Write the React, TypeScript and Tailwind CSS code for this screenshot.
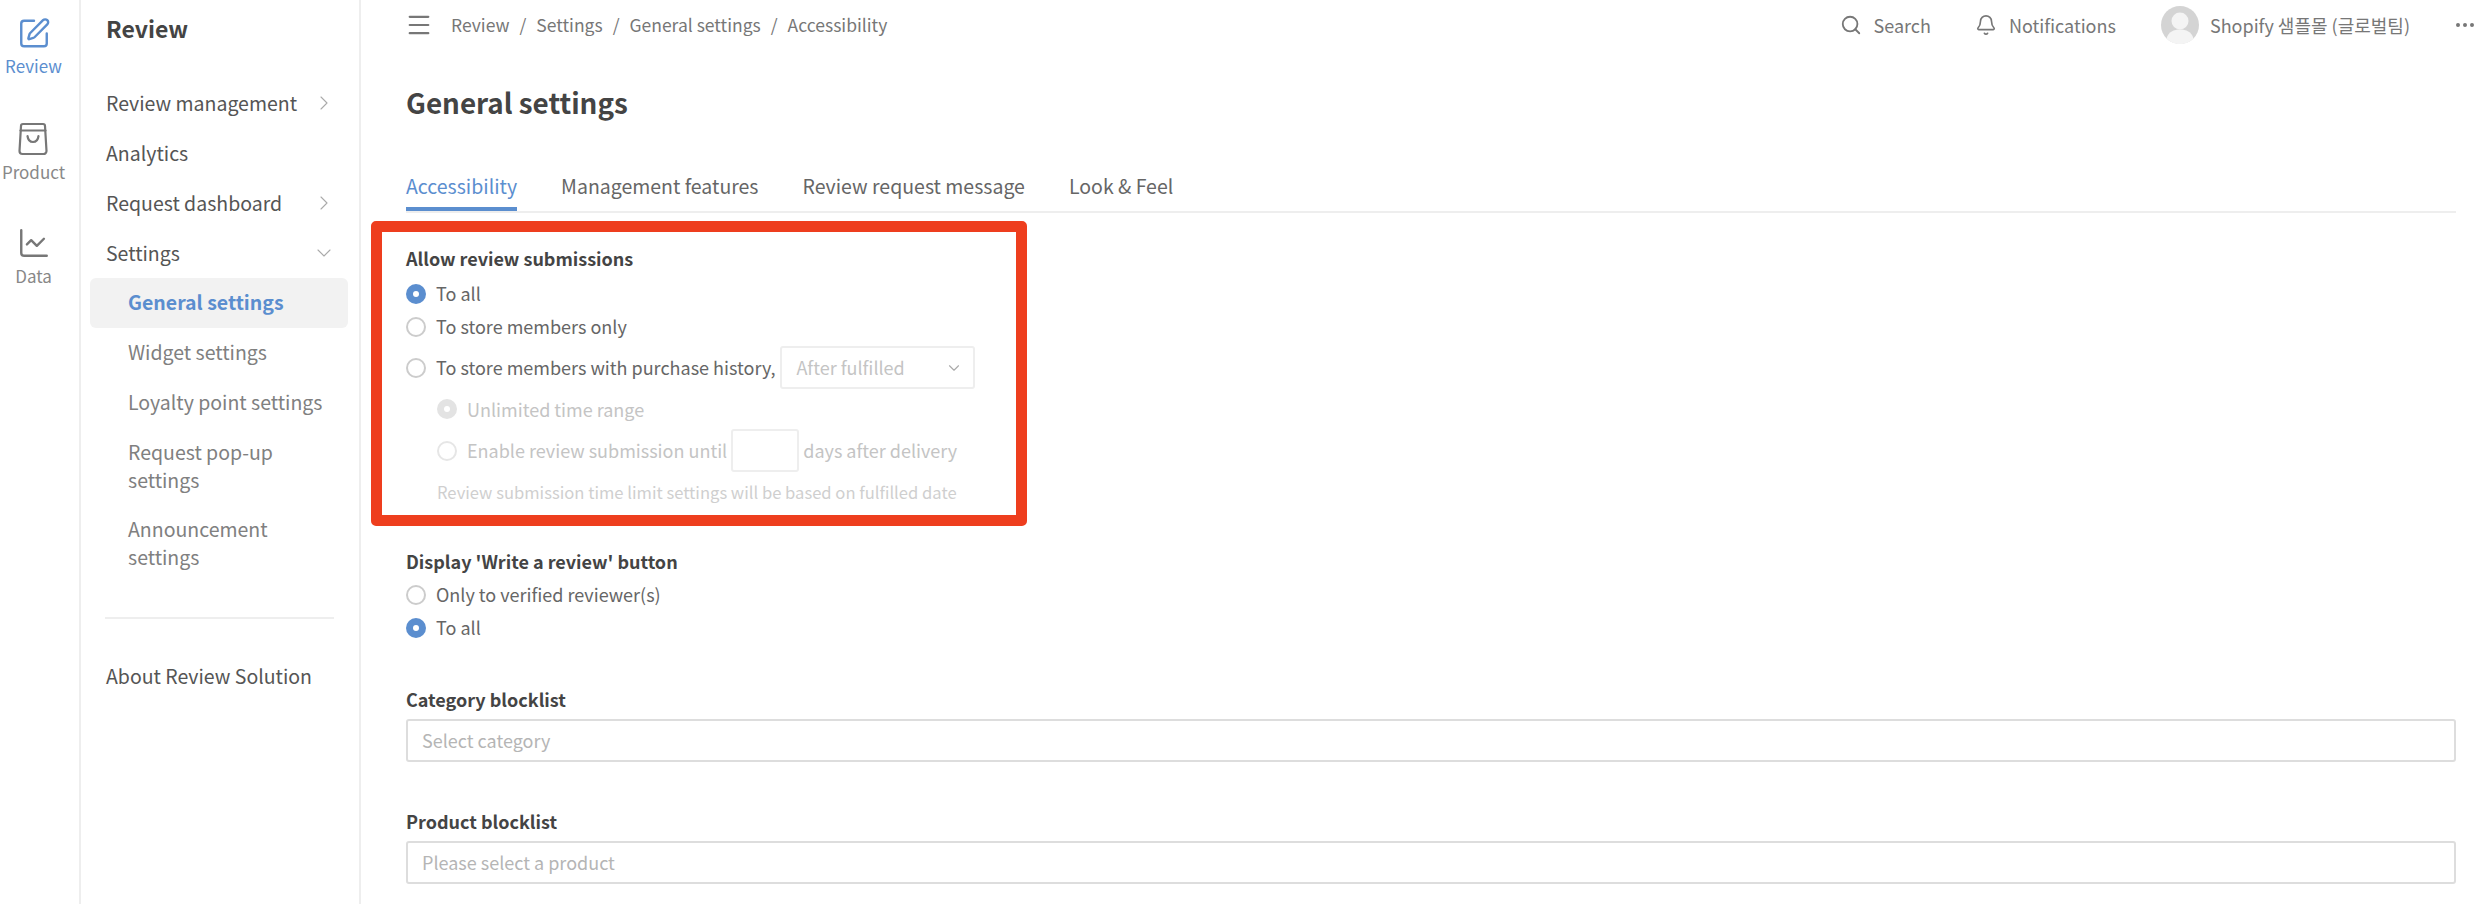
import React from "react";
import { SquarePen, ChartLine, ChevronRight, ChevronDown, Search, Bell, Menu, Ellipsis } from "lucide-react";

const Radio = ({ checked, disabled }: { checked?: boolean; disabled?: boolean }) => {
  if (checked && disabled)
    return (
      <span className="flex h-[20px] w-[20px] shrink-0 items-center justify-center rounded-full bg-[#e3e3e3]">
        <span className="h-[6px] w-[6px] rounded-full bg-white" />
      </span>
    );
  if (checked)
    return (
      <span className="flex h-[20px] w-[20px] shrink-0 items-center justify-center rounded-full bg-[#5b8ecf]">
        <span className="h-[6px] w-[6px] rounded-full bg-white" />
      </span>
    );
  return (
    <span
      className={
        disabled
          ? "h-[20px] w-[20px] shrink-0 rounded-full border-2 border-[#e6e6e6] bg-white"
          : "h-[20px] w-[20px] shrink-0 rounded-full border-2 border-[#cccccc] bg-white"
      }
    />
  );
};

const RailItem = ({ icon, label, active, className }: { icon: React.ReactNode; label: string; active?: boolean; className?: string }) => (
  <div className={"flex flex-col items-center " + (className ?? "")}>
    <div className="flex h-[34px] w-[34px] items-center justify-center">{icon}</div>
    <div className={active ? "mt-[5px] text-[17px] leading-[22px] text-[#5b8ecf]" : "mt-[5px] text-[17px] leading-[22px] text-[#888888]"}>{label}</div>
  </div>
);

const NavRow = ({ label, chevron }: { label: string; chevron?: "right" | "down" }) => (
  <div className="flex h-[50px] items-center justify-between pb-[1px] pl-[25px] pr-[23px] text-[19.5px] text-[#555555]">
    <span>{label}</span>
    {chevron === "right" && <ChevronRight size={24} strokeWidth={1.1} color="#aaaaaa" />}
    {chevron === "down" && <ChevronDown size={24} strokeWidth={1.1} color="#aaaaaa" />}
  </div>
);

const SubRow = ({ children, active }: { children: React.ReactNode; active?: boolean }) =>
  active ? (
    <div className="mx-[9px] mr-[11px] flex h-[50px] items-center rounded-[6px] bg-[#f2f2f2] pb-[2px] pl-[38px] text-[19.5px] font-bold text-[#5b8ecf]">
      {children}
    </div>
  ) : (
    <div className="flex min-h-[50px] items-center pb-[2px] pl-[47px] pr-[20px] text-[19.5px] leading-[28px] text-[#808080]">{children}</div>
  );

const OptRow = ({ children, className }: { children: React.ReactNode; className?: string }) => (
  <div className={"flex h-[33px] items-center gap-[10px] text-[18px] text-[#666666] " + (className ?? "")}>{children}</div>
);

const Label = ({ children, className }: { children: React.ReactNode; className?: string }) => (
  <div className={"h-[26px] text-[18px] font-bold leading-[26px] text-[#444444] " + (className ?? "")}>{children}</div>
);

const Field = ({ placeholder }: { placeholder: string }) => (
  <div className="flex h-[43px] items-center rounded-[3px] border-2 border-[#dddddd] px-[14px] text-[18px] text-[#b5b5b5]">{placeholder}</div>
);

export default function App() {
  return (
    <div
      className="relative flex h-[904px] w-[2486px] overflow-hidden bg-white"
      style={{ fontFamily: '"Noto Sans CJK KR", "Noto Sans", sans-serif' }}
    >
      {/* icon rail */}
      <div className="flex w-[81px] shrink-0 flex-col items-center border-r-2 border-[#eeeeee] pr-[12px] pt-[16px]">
        <RailItem active label="Review" icon={<SquarePen size={35} strokeWidth={1.7} color="#5b8ecf" />} />
        <RailItem
          className="mt-[45px]"
          label="Product"
          icon={
            <svg width="32" height="34" viewBox="0 0 32 34" fill="none" stroke="#777777" strokeWidth="2.2" strokeLinecap="round" strokeLinejoin="round">
              <path d="M6 2h20a2 2 0 0 1 2 2l1.500 25a3 3 0 0 1-3 3h-21a3 3 0 0 1-3-3L4 4a2 2 0 0 1 2-2z" />
              <path d="M3.500 8.500h25" />
              <path d="M10.500 14c.5 4 2.700 6 5.500 6s5-2 5.500-6" />
            </svg>
          }
        />
        <RailItem className="mt-[43px]" label="Data" icon={<ChartLine size={34} strokeWidth={1.7} color="#777777" />} />
      </div>

      {/* secondary sidebar */}
      <div className="flex w-[280px] shrink-0 flex-col border-r-2 border-[#eeeeee]">
        <div className="flex h-[56px] items-center pl-[25px] text-[23px] font-bold text-[#444444]">Review</div>
        <div className="mt-[22px]">
          <NavRow label="Review management" chevron="right" />
          <NavRow label="Analytics" />
          <NavRow label="Request dashboard" chevron="right" />
          <NavRow label="Settings" chevron="down" />
          <SubRow active>General settings</SubRow>
          <SubRow>Widget settings</SubRow>
          <SubRow>Loyalty point settings</SubRow>
          <SubRow>
            <span className="py-[9.5px]">Request pop-up settings</span>
          </SubRow>
          <SubRow>
            <span className="py-[9.5px]">Announcement settings</span>
          </SubRow>
        </div>
        <div className="mx-[24px] mr-[25px] mt-[35px] h-[2px] bg-[#eeeeee]" />
        <div className="mt-[33px] flex h-[50px] items-center pb-[2px] pl-[25px] text-[19.500px] text-[#555555]">About Review Solution</div>
      </div>

      {/* main */}
      <div className="flex min-w-0 flex-1 flex-col pl-[45px] pr-[30px]">
        {/* header */}
        <div className="flex h-[50px] shrink-0 items-center text-[18px] text-[#777777]">
          <Menu size={28} strokeWidth={1.8} color="#777777" className="ml-[-1px]" />
          <div className="ml-[18px] flex gap-[10px] text-[17.5px]">
            <span>Review</span>
            <span>/</span>
            <span>Settings</span>
            <span>/</span>
            <span>General settings</span>
            <span>/</span>
            <span>Accessibility</span>
          </div>
          <div className="ml-auto flex items-center">
            <Search size={22} strokeWidth={2} color="#777777" />
            <span className="ml-[11px]">Search</span>
            <Bell size={22} strokeWidth={1.8} color="#777777" className="ml-[44px]" />
            <span className="ml-[12px]">Notifications</span>
            <svg width="38" height="38" viewBox="0 0 38 38" className="ml-[45px]">
              <circle cx="19" cy="19" r="19" fill="#d4d4d4" />
              <circle cx="19" cy="15" r="8.500" fill="#f4f4f4" />
              <path d="M5.500 32.500c2-7 7.500-9 13.500-9s11.500 2 13.500 9a19 19 0 0 1-27 0z" fill="#f4f4f4" />
            </svg>
            <span className="ml-[11px]">Shopify 샘플몰 (글로벌팀)</span>
            <Ellipsis size={24} strokeWidth={2} color="#777777" className="ml-[43px] mr-[-21px]" />
          </div>
        </div>

        {/* title */}
        <h1 className="mt-[32px] h-[40px] text-[27.8px] font-bold leading-[40px] text-[#444444]">General settings</h1>

        {/* tabs */}
        <div className="mt-[44px] flex h-[47px] shrink-0 gap-[44px] border-b-2 border-[#eeeeee] text-[19.5px] text-[#666666]">
          <div className="flex h-[45px] items-center border-b-[4px] border-[#5b8ecf] pb-[2px] text-[#5b8ecf]">Accessibility</div>
          <div className="flex h-[45px] items-center border-b-[4px] border-transparent pb-[2px]">Management features</div>
          <div className="flex h-[45px] items-center border-b-[4px] border-transparent pb-[2px]">Review request message</div>
          <div className="flex h-[45px] items-center border-b-[4px] border-transparent pb-[2px]">Look &amp; Feel</div>
        </div>

        {/* allow review submissions */}
        <Label className="mt-[32px]">Allow review submissions</Label>
        <OptRow className="mt-[6px]">
          <Radio checked />
          To all
        </OptRow>
        <OptRow>
          <Radio />
          To store members only
        </OptRow>
        <div className="mt-[3px] flex h-[43px] items-center gap-[10px] text-[18px] text-[#666666]">
          <Radio />
          <span>To store members with purchase history,</span>
          <div className="ml-[-6px] flex h-[43px] w-[195px] items-center justify-between rounded-[3px] border-2 border-[#eeeeee] pl-[15px] pr-[10px] text-[#c4c4c4]">
            <span>After fulfilled</span>
            <ChevronDown size={18} strokeWidth={1.5} color="#aaaaaa" />
          </div>
        </div>
        <div className="mt-[5px] flex h-[30px] items-center gap-[10px] pl-[31px] text-[18px] text-[#c4c4c4]">
          <Radio checked disabled />
          Unlimited time range
        </div>
        <div className="mt-[5px] flex h-[43px] items-center gap-[10px] pl-[31px] text-[18px] text-[#c4c4c4]">
          <Radio disabled />
          <span>Enable review submission until</span>
          <div className="ml-[-6px] h-[43px] w-[68px] rounded-[3px] border-2 border-[#eeeeee]" />
          <span className="ml-[-6px]">days after delivery</span>
        </div>
        <div className="flex h-[40px] items-center pl-[31px] text-[16.6px] text-[#cfcfcf]">Review submission time limit settings will be based on fulfilled date</div>

        {/* display write a review */}
        <Label className="mt-[36px]">Display 'Write a review' button</Label>
        <OptRow className="mt-[4px]">
          <Radio />
          Only to verified reviewer(s)
        </OptRow>
        <OptRow>
          <Radio checked />
          To all
        </OptRow>

        {/* blocklists */}
        <Label className="mt-[42px]">Category blocklist</Label>
        <div className="mt-[7px]">
          <Field placeholder="Select category" />
        </div>
        <Label className="mt-[46px]">Product blocklist</Label>
        <div className="mt-[7px]">
          <Field placeholder="Please select a product" />
        </div>
      </div>

      {/* annotation overlay */}
      <div className="pointer-events-none absolute left-[371px] top-[221px] h-[305px] w-[656px] rounded-[5px] border-[11px] border-[#ee3e1e]" />
    </div>
  );
}
